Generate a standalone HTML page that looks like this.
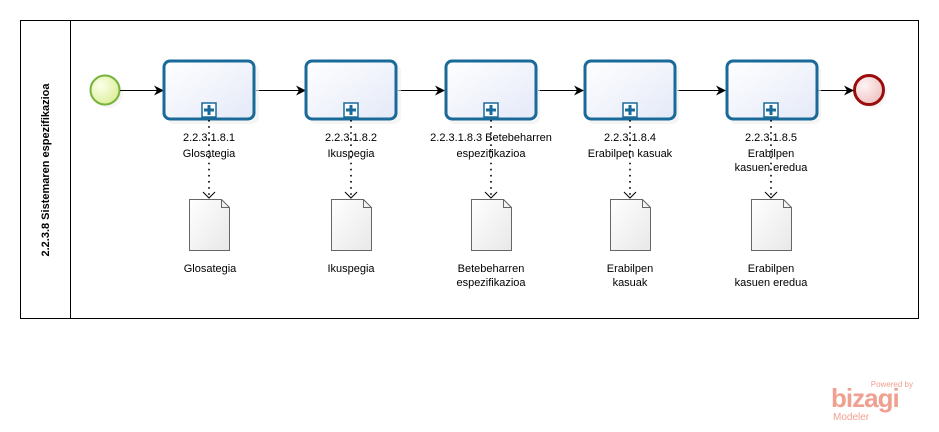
<!DOCTYPE html>
<html><head><style>body{margin:0;background:#fff}svg{display:block}text{font-family:"Liberation Sans",sans-serif;font-size:11px;fill:#000}</style></head><body>
<svg width="939" height="432" viewBox="0 0 939 432" xmlns="http://www.w3.org/2000/svg">
<defs>
<linearGradient id="tg" x1="0" y1="0" x2="1" y2="1"><stop offset="0" stop-color="#ffffff"/><stop offset="1" stop-color="#e4e9f8"/></linearGradient>
<radialGradient id="sg" cx="0.35" cy="0.35" r="0.7"><stop offset="0" stop-color="#fbffe8"/><stop offset="1" stop-color="#dcef9c"/></radialGradient>
<radialGradient id="eg" cx="0.35" cy="0.35" r="0.7"><stop offset="0" stop-color="#fff4f4"/><stop offset="1" stop-color="#eec2c2"/></radialGradient>
<linearGradient id="dg" x1="0" y1="0" x2="1" y2="1"><stop offset="0" stop-color="#ffffff"/><stop offset="1" stop-color="#e8e8e8"/></linearGradient>
<marker id="ar" markerWidth="10" markerHeight="10" refX="9" refY="5" orient="auto" markerUnits="userSpaceOnUse"><path d="M0,0 L10,5 L0,10 L3,5 Z" fill="#000"/></marker>
</defs>
<rect x="20.5" y="20.5" width="898" height="298" fill="#fff" stroke="#000"/>
<line x1="70.5" y1="20" x2="70.5" y2="319" stroke="#000"/>
<text transform="translate(49,170) rotate(-90)" text-anchor="middle" style="font-weight:bold;font-size:11px">2.2.3.8 Sistemaren espezifikazioa</text>
<circle cx="108" cy="93" r="15" fill="#eee" opacity=".6"/>
<circle cx="105" cy="90" r="14.5" fill="url(#sg)" stroke="#77b33a" stroke-width="2"/>
<circle cx="872" cy="93" r="15" fill="#eee" opacity=".6"/>
<circle cx="869" cy="90" r="14.5" fill="url(#eg)" stroke="#9b0d0d" stroke-width="3"/>
<g stroke="#000" stroke-width="1" marker-end="url(#ar)">
<line x1="120" y1="90.5" x2="163" y2="90.5"/>
<line x1="256" y1="90.5" x2="305" y2="90.5"/>
<line x1="398" y1="90.5" x2="444" y2="90.5"/>
<line x1="538" y1="90.5" x2="583" y2="90.5"/>
<line x1="677" y1="90.5" x2="725" y2="90.5"/>
<line x1="818" y1="90.5" x2="853" y2="90.5"/>
</g>
<g id="tasks">
<!-- task template repeated -->
</g>
<g>
<rect x="167" y="64" width="92" height="60" rx="7" fill="#eee" opacity=".6"/>
<rect x="164" y="61" width="90" height="58" rx="6" fill="url(#tg)" stroke="#1a6a99" stroke-width="3"/>
<rect x="202" y="103" width="14" height="14" fill="#fff" stroke="#1a6a99" stroke-width="1.5"/><path d="M209,105v10M204,110h10" stroke="#1a6a99" stroke-width="3"/>
<rect x="309" y="64" width="92" height="60" rx="7" fill="#eee" opacity=".6"/>
<rect x="306" y="61" width="90" height="58" rx="6" fill="url(#tg)" stroke="#1a6a99" stroke-width="3"/>
<rect x="344" y="103" width="14" height="14" fill="#fff" stroke="#1a6a99" stroke-width="1.5"/><path d="M351,105v10M346,110h10" stroke="#1a6a99" stroke-width="3"/>
<rect x="448" y="64" width="92" height="60" rx="7" fill="#eee" opacity=".6"/>
<rect x="446" y="61" width="90" height="58" rx="6" fill="url(#tg)" stroke="#1a6a99" stroke-width="3"/>
<rect x="484" y="103" width="14" height="14" fill="#fff" stroke="#1a6a99" stroke-width="1.5"/><path d="M491,105v10M486,110h10" stroke="#1a6a99" stroke-width="3"/>
<rect x="587" y="64" width="92" height="60" rx="7" fill="#eee" opacity=".6"/>
<rect x="585" y="61" width="90" height="58" rx="6" fill="url(#tg)" stroke="#1a6a99" stroke-width="3"/>
<rect x="623" y="103" width="14" height="14" fill="#fff" stroke="#1a6a99" stroke-width="1.5"/><path d="M630,105v10M625,110h10" stroke="#1a6a99" stroke-width="3"/>
<rect x="729" y="64" width="92" height="60" rx="7" fill="#eee" opacity=".6"/>
<rect x="727" y="61" width="90" height="58" rx="6" fill="url(#tg)" stroke="#1a6a99" stroke-width="3"/>
<rect x="764" y="103" width="14" height="14" fill="#fff" stroke="#1a6a99" stroke-width="1.5"/><path d="M771,105v10M766,110h10" stroke="#1a6a99" stroke-width="3"/>
</g>
<g stroke="#000" stroke-width="1.6" stroke-dasharray="1.6,4.5" fill="none">
<line x1="209" y1="120" x2="209" y2="195"/><line x1="351" y1="120" x2="351" y2="195"/><line x1="491" y1="120" x2="491" y2="195"/><line x1="630" y1="120" x2="630" y2="195"/><line x1="771" y1="120" x2="771" y2="195"/>
</g>
<g stroke="#000" stroke-width="1" fill="none">
<path d="M203,192l6,6l6,-6"/><path d="M345,192l6,6l6,-6"/><path d="M485,192l6,6l6,-6"/><path d="M624,192l6,6l6,-6"/><path d="M765,192l6,6l6,-6"/>
</g>
<g fill="url(#dg)" stroke="#666">
<path d="M189.5,199.5h32l8,8v43h-40z"/><path d="M221.5,199.5v8h8" fill="none"/>
<path d="M331.5,199.5h32l8,8v43h-40z"/><path d="M363.5,199.5v8h8" fill="none"/>
<path d="M471.5,199.5h32l8,8v43h-40z"/><path d="M503.5,199.5v8h8" fill="none"/>
<path d="M610.5,199.5h32l8,8v43h-40z"/><path d="M642.5,199.5v8h8" fill="none"/>
<path d="M751.5,199.5h32l8,8v43h-40z"/><path d="M783.5,199.5v8h8" fill="none"/>
</g>
<g text-anchor="middle">
<text x="209" y="141">2.2.3.1.8.1</text><text x="209" y="157">Glosategia</text>
<text x="351" y="141">2.2.3.1.8.2</text><text x="351" y="157">Ikuspegia</text>
<text x="491" y="141">2.2.3.1.8.3 Betebeharren</text><text x="491" y="157">espezifikazioa</text>
<text x="630" y="141">2.2.3.1.8.4</text><text x="630" y="157">Erabilpen kasuak</text>
<text x="771" y="141">2.2.3.1.8.5</text><text x="771" y="157">Erabilpen</text><text x="771" y="171">kasuen eredua</text>
<text x="210" y="272">Glosategia</text>
<text x="351" y="272">Ikuspegia</text>
<text x="491" y="272">Betebeharren</text><text x="491" y="286">espezifikazioa</text>
<text x="630" y="272">Erabilpen</text><text x="630" y="286">kasuak</text>
<text x="771" y="272">Erabilpen</text><text x="771" y="286">kasuen eredua</text>
</g>
<text x="913" y="387" text-anchor="end" style="font-size:8px;fill:#f0a090">Powered by</text>
<text x="831" y="407" style="font-size:26px;font-weight:bold;fill:#f0a090;letter-spacing:-1px">bizagi</text>
<text x="833" y="420" style="font-size:10px;fill:#f0a090">Modeler</text>
</svg>
</body></html>
